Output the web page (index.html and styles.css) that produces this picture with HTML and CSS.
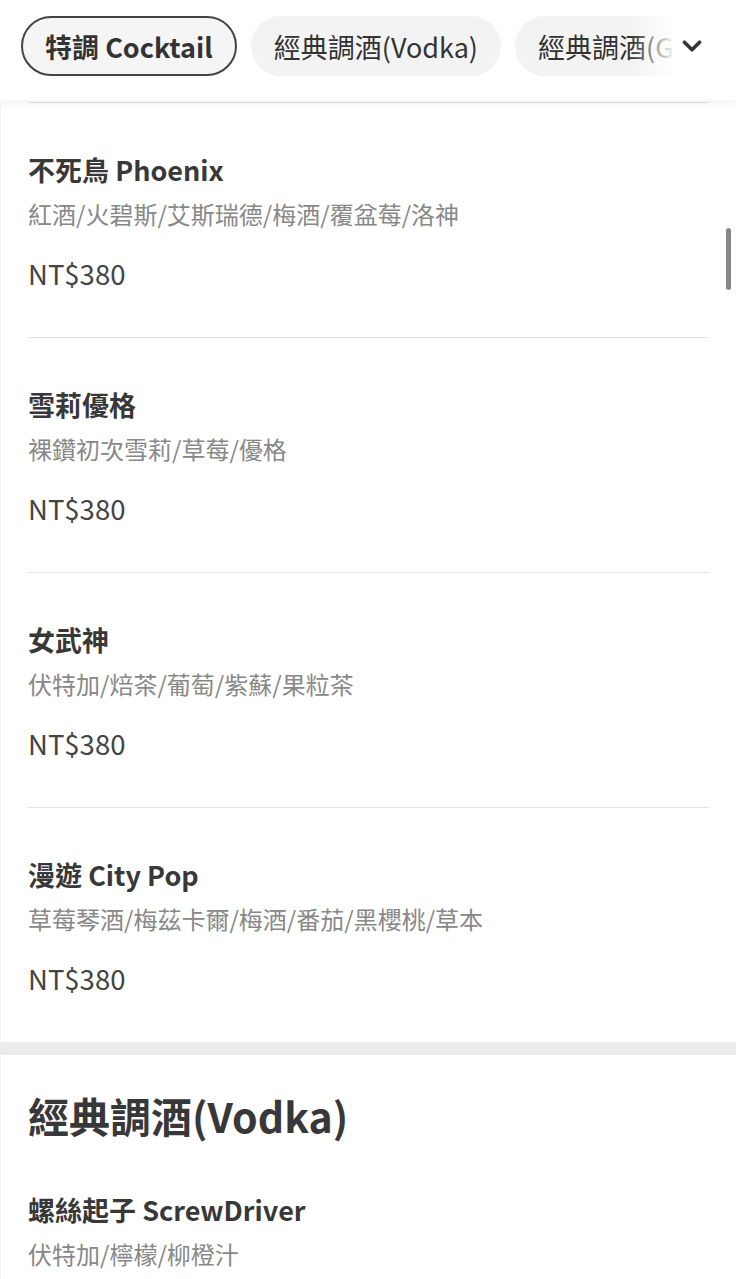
FILE: index.html
```html
<!DOCTYPE html>
<html lang="zh-Hant">
<head>
    <meta charset="UTF-8">
    <meta name="viewport" content="width=device-width, initial-scale=1.0">
    <title>Menu</title>
    <link rel="stylesheet" href="styles.css">
</head>
<body>
    <div class="tabs">
        <div class="tab-row">
            <span class="tab active">特調 Cocktail</span>
            <span class="tab">經典調酒(Vodka)</span>
            <span class="tab">經典調酒(Gin)</span>
        </div>
        <div class="tab-fade">
            <svg width="26" height="26" viewBox="0 0 24 24"><path d="M5 8.5l7 7 7-7" fill="none" stroke="#333" stroke-width="3.2" stroke-linecap="round" stroke-linejoin="round"/></svg>
        </div>
    </div>

    <div class="menu">
        <div class="section">
            <div class="item top-line"></div>
            <div class="item">
                <div class="name">不死鳥 Phoenix</div>
                <div class="desc">紅酒/火碧斯/艾斯瑞德/梅酒/覆盆莓/洛神</div>
                <div class="price">NT$380</div>
            </div>
            <div class="item">
                <div class="name">雪莉優格</div>
                <div class="desc">裸鑽初次雪莉/草莓/優格</div>
                <div class="price">NT$380</div>
            </div>
            <div class="item">
                <div class="name">女武神</div>
                <div class="desc">伏特加/焙茶/葡萄/紫蘇/果粒茶</div>
                <div class="price">NT$380</div>
            </div>
            <div class="item last">
                <div class="name">漫遊 City Pop</div>
                <div class="desc">草莓琴酒/梅茲卡爾/梅酒/番茄/黑櫻桃/草本</div>
                <div class="price">NT$380</div>
            </div>
        </div>

        <div class="band"></div>

        <div class="section">
            <h2 class="section-title">經典調酒(Vodka)</h2>
            <div class="item">
                <div class="name">螺絲起子 ScrewDriver</div>
                <div class="desc">伏特加/檸檬/柳橙汁</div>
            </div>
        </div>
    </div>

    <div class="scroll-thumb"></div>
</body>
</html>
```

FILE: styles.css
```css
body {
    margin: 0;
    font-family: "Noto Sans CJK TC", "Noto Sans", sans-serif;
    color: #333;
    background: #fff;
    overflow: hidden;
}
.tabs {
    position: relative;
    height: 100px;
    background: #fff;
    box-shadow: 0 4px 10px rgba(0, 0, 0, 0.05);
    z-index: 2;
    overflow: hidden;
}
.tab-row {
    display: flex;
    gap: 14px;
    padding: 16px 21px;
    white-space: nowrap;
}
.tab {
    flex: none;
    height: 60px;
    box-sizing: border-box;
    display: flex;
    align-items: center;
    padding: 0 23px;
    border-radius: 30px;
    background: #f3f3f3;
    font-size: 27px;
    color: #333;
}
.tab.active {
    border: 2px solid #444;
    padding: 0 22px;
    font-weight: 700;
    background: #f5f5f5;
}
.tab-fade {
    position: absolute;
    top: 16px;
    right: 0;
    width: 104px;
    height: 60px;
    display: flex;
    align-items: center;
    justify-content: flex-end;
    padding-right: 31px;
    box-sizing: border-box;
    background: linear-gradient(to right, rgba(255,255,255,0) 0, #fff 44px);
}
.menu {
    margin-top: 2px;
}
.section {
    border-left: 1px solid #f2f2f2;
}
.item {
    margin: 0 27px;
    padding: 49px 0 46px;
    border-bottom: 1px solid #e2e2e2;
}
.item.top-line {
    padding: 0;
}
.item.last {
    border-bottom: none;
}
.name {
    font-size: 27px;
    line-height: 36px;
    font-weight: 700;
    color: #383838;
}
.desc {
    margin-top: 9px;
    font-size: 24px;
    line-height: 34px;
    color: #888;
}
.price {
    margin-top: 24px;
    font-size: 27.5px;
    line-height: 36px;
    color: #444;
}
.band {
    height: 13px;
    background: #ebebeb;
}
.section-title {
    margin: 0 27px;
    padding-top: 32px;
    font-size: 41px;
    line-height: 56px;
    font-weight: 700;
    color: #383838;
}
.scroll-thumb {
    position: fixed;
    top: 228px;
    right: 5px;
    width: 5px;
    height: 62px;
    border-radius: 3px;
    background: #888;
}
```
